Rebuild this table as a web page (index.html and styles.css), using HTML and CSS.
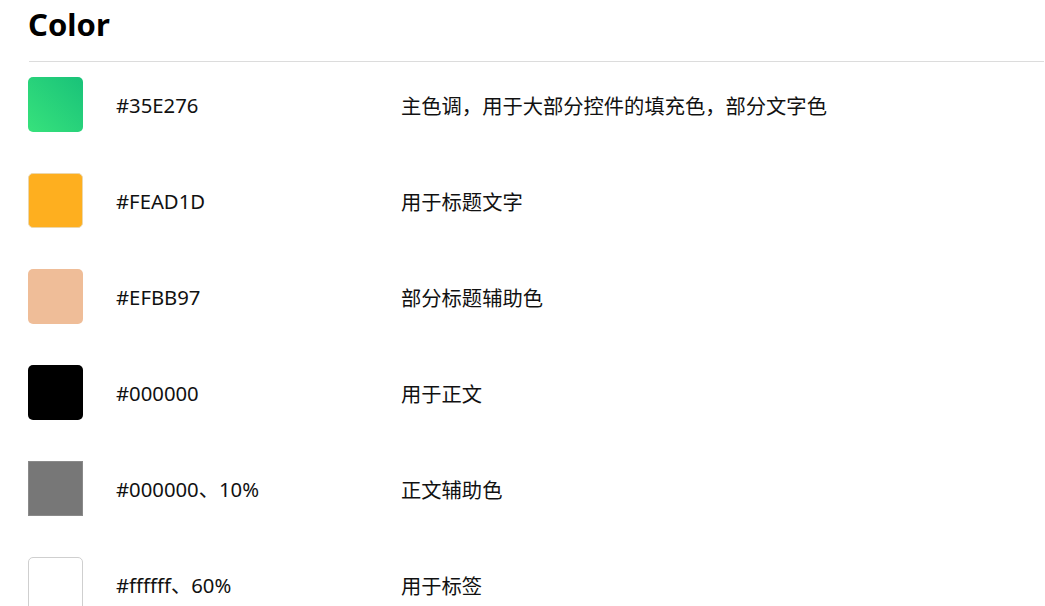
FILE: index.html
```html
<!DOCTYPE html>
<html lang="zh-CN">
<head>
<meta charset="utf-8">
<title>Color</title>
<link rel="stylesheet" href="styles.css">
</head>
<body>
<main class="page">
  <h1 class="title">Color</h1>
  <div class="divider"></div>
  <ul class="colors">
    <li class="row"><span class="swatch sw-green"></span><span class="hex">#35E276</span><span class="desc">主色调，用于大部分控件的填充色，部分文字色</span></li>
    <li class="row"><span class="swatch sw-orange"></span><span class="hex">#FEAD1D</span><span class="desc">用于标题文字</span></li>
    <li class="row"><span class="swatch sw-peach"></span><span class="hex">#EFBB97</span><span class="desc">部分标题辅助色</span></li>
    <li class="row"><span class="swatch sw-black"></span><span class="hex">#000000</span><span class="desc">用于正文</span></li>
    <li class="row"><span class="swatch sw-gray"></span><span class="hex">#000000、10%</span><span class="desc">正文辅助色</span></li>
    <li class="row"><span class="swatch sw-white"></span><span class="hex">#ffffff、60%</span><span class="desc">用于标签</span></li>
  </ul>
</main>
</body>
</html>
```

FILE: styles.css
```css
html, body {
  margin: 0;
  padding: 0;
  background: #ffffff;
}
body {
  font-family: "Noto Sans", "Noto Sans CJK SC", sans-serif;
  color: #111111;
  overflow: hidden;
}
.page {
  padding: 0 1px 0 28px;
}
.title {
  margin: 0;
  padding-top: 4px;
  font-size: 31px;
  line-height: 40px;
  font-weight: 700;
  color: #000;
  height: 61px;
  box-sizing: border-box;
}
.divider {
  height: 1px;
  background: #dcdcdc;
  margin-left: 1px;
}
.colors {
  list-style: none;
  margin: 15px 0 0 0;
  padding: 0;
  display: flex;
  flex-direction: column;
  gap: 41px;
}
.row {
  display: grid;
  grid-template-columns: 88px 285px 1fr;
  align-items: center;
  height: 55px;
}
.swatch {
  display: block;
  width: 55px;
  height: 55px;
  box-sizing: border-box;
  border-radius: 5px;
}
.hex, .desc {
  font-size: 20.3px;
  line-height: 26px;
  color: #111;
}
.desc {
  font-family: "Noto Sans CJK SC", sans-serif;
}
.sw-green {
  background: linear-gradient(to top right, #37e27c, #19c279);
}
.sw-orange {
  background: #feaf1f;
  border: 1px solid #ecd7ab;
}
.sw-peach {
  background: #efbd98;
}
.sw-black {
  background: #000;
}
.sw-gray {
  background: #777777;
  border: 1px solid #8a8a8a;
  border-radius: 0;
}
.sw-white {
  background: #fff;
  border: 1px solid #cfcfcf;
}
```
